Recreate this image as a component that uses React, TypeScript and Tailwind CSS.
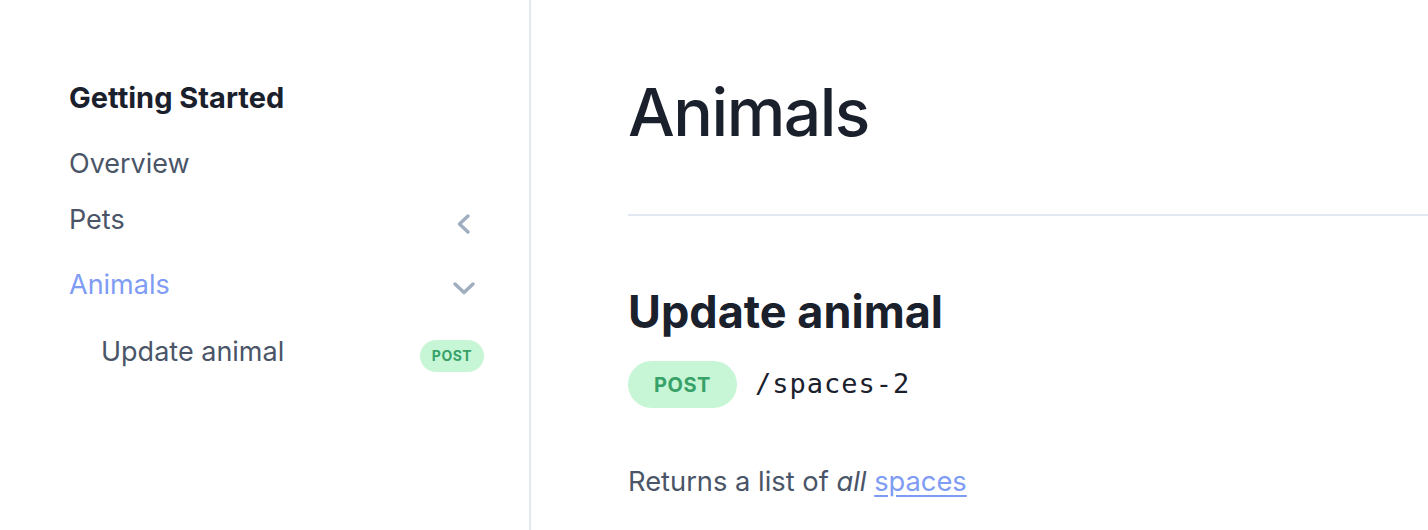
const SANS = 'font-["Inter","Noto_Sans","Liberation_Sans",sans-serif]';

function Badge({ small }: { small?: boolean }) {
  return (
    <span
      className={
        small
          ? 'mt-[7px] flex items-center justify-center w-[64px] h-[32px] rounded-full bg-[#c6f6d5] text-[#38a169] text-[14px] font-bold tracking-[0.5px]'
          : 'flex items-center justify-center w-[109px] h-[47px] rounded-full bg-[#c6f6d5] text-[#38a169] text-[20px] font-bold tracking-[0.5px]'
      }
    >
      POST
    </span>
  );
}

function ChevLeft() {
  return (
    <svg width="20" height="24" viewBox="0 0 20 24" fill="none" stroke="currentColor" strokeWidth="3.5" strokeLinecap="round" strokeLinejoin="round">
      <polyline points="14,4 5.5,12 14,20" />
    </svg>
  );
}

function ChevDown() {
  return (
    <svg width="24" height="16" viewBox="0 0 24 16" fill="none" stroke="currentColor" strokeWidth="3.5" strokeLinecap="round" strokeLinejoin="round">
      <polyline points="3,4 12,12.5 21,4" />
    </svg>
  );
}

export default function App() {
  return (
    <div className={`flex h-[530px] w-full bg-white overflow-hidden ${SANS}`}>
      {/* Sidebar */}
      <aside className="w-[531px] shrink-0 border-r-2 border-[#e2e8f0] pl-[69px] pr-[45px] pt-[78px] flex flex-col">
        <div className="h-[40px] flex items-center text-[29px] font-bold text-[#1a202c]">
          Getting Started
        </div>
        <div className="mt-[26px] h-[40px] flex items-center text-[27px] text-[#4a5568]">
          Overview
        </div>
        <div className="mt-[16px] h-[40px] flex items-center justify-between text-[27px] text-[#4a5568]">
          <span>Pets</span>
          <span className="w-[40px] mt-[8px] flex justify-center text-[#a0aec0]">
            <ChevLeft />
          </span>
        </div>
        <div className="mt-[25px] h-[40px] flex items-center justify-between text-[27px] text-[#7f9cf5]">
          <span>Animals</span>
          <span className="w-[40px] mt-[5px] flex justify-center text-[#a0aec0]">
            <ChevDown />
          </span>
        </div>
        <div className="mt-[27px] h-[40px] pl-[32px] flex items-center justify-between text-[27px] text-[#4a5568]">
          <span>Update animal</span>
          <Badge small />
        </div>
      </aside>

      {/* Main */}
      <main className="flex-1 pl-[97px] pt-[78px] flex flex-col">
        <h1 className="h-[68px] leading-[68px] text-[66px] font-medium text-[#1a202c] tracking-[-1.5px]">
          Animals
        </h1>
        <div className="mt-[68px] h-[2px] bg-[#e2e8f0]" />
        <h2 className="mt-[74px] h-[44px] leading-[44px] text-[45px] font-bold text-[#1a202c]">
          Update animal
        </h2>
        <div className="mt-[27px] flex items-center gap-[18px]">
          <Badge />
          <span className='font-["DejaVu_Sans_Mono","Liberation_Mono",monospace] text-[27px] text-[#1a202c] tracking-[1px]'>
            /spaces-2
          </span>
        </div>
        <p className="mt-[54px] h-[40px] leading-[40px] text-[27.3px] text-[#4a5568]">
          Returns a list of <em>all</em>{' '}
          <a href="#" className="text-[#7f9cf5] underline underline-offset-[4px]">
            spaces
          </a>
        </p>
      </main>
    </div>
  );
}
